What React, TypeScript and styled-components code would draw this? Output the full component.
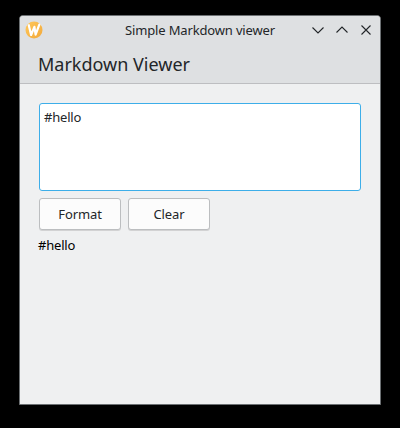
import React, { useState } from "react";
import styled, { createGlobalStyle } from "styled-components";

const GlobalStyle = createGlobalStyle`
  *, *::before, *::after { box-sizing: border-box; }
  html, body { margin: 0; height: 100%; background: #000; overflow: hidden; }
  body { font-family: "Noto Sans", sans-serif; font-size: 13px; color: #232629; }
`;

const Desktop = styled.div`
  width: 400px;
  height: 428px;
  padding: 15px 19px 23px;
  background: #000;
`;

const Window = styled.main`
  display: flex;
  flex-direction: column;
  width: 362px;
  height: 390px;
  border: 1px solid #6c7073;
  border-radius: 4px 4px 0 0;
  background: #eff0f1;
  overflow: hidden;
`;

const TitleBar = styled.header`
  display: grid;
  grid-template-columns: 70px 1fr 70px;
  align-items: center;
  height: 28px;
  flex: none;
  background: #dee0e2;
`;

const AppIcon = styled.svg`
  display: block;
  width: 18px;
  height: 18px;
  margin-left: 5px;
`;

const Title = styled.div`
  line-height: 18px;
  text-align: center;
  white-space: nowrap;
  padding-bottom: 1px;
  letter-spacing: -0.16px;
`;

const Controls = styled.div`
  display: flex;
  justify-content: flex-end;
  gap: 6px;
  padding-right: 5px;
`;

const ControlButton = styled.button`
  display: block;
  width: 18px;
  height: 18px;
  padding: 0;
  border: 0;
  background: none;

  svg {
    display: block;
    fill: none;
    stroke: #232629;
    stroke-width: 1.1;
  }
`;

const PageHeader = styled.div`
  height: 40px;
  flex: none;
  padding: 8px 18px 0;
  border-bottom: 1px solid #bdbec1;
  background: #dee0e2;
`;

const Heading = styled.h1`
  margin: 0;
  font-size: 18px;
  font-weight: 400;
  line-height: 25px;
`;

const Content = styled.section`
  display: flex;
  flex-direction: column;
  padding: 19px 19px 0;
`;

const Editor = styled.textarea`
  display: block;
  height: 88px;
  width: 322px;
  padding: 4px;
  border: 1px solid #3daee9;
  border-radius: 3px;
  outline: none;
  resize: none;
  background: #fff;
  color: #232629;
  font: 13px/18px "Noto Sans", sans-serif;
  letter-spacing: -0.2px;
`;

const Actions = styled.div`
  display: flex;
  gap: 7px;
  margin-top: 7px;
`;

const ActionButton = styled.button`
  width: 82px;
  height: 32px;
  padding: 0;
  border: 1px solid #bcbec0;
  border-radius: 3px;
  background: #fcfcfc;
  box-shadow: 0 1px 0 rgba(0, 0, 0, 0.12);
  color: #232629;
  font: 13px/18px "Noto Sans", sans-serif;
  letter-spacing: -0.1px;
`;

const Output = styled.div`
  margin: 6px 0 0 -1px;
  line-height: 18px;
  letter-spacing: -0.2px;
  color: #000;
`;

const controls = [
  { label: "Minimize", d: "M3.5 6.5 9 12l5.5-5.5" },
  { label: "Maximize", d: "M3.5 11.5 9 6l5.5 5.5" },
  { label: "Close", d: "M4.5 4.5l9 9M13.5 4.5l-9 9" },
];

export default function App() {
  const [source, setSource] = useState("#hello");
  const [output, setOutput] = useState("#hello");

  return (
    <Desktop>
      <GlobalStyle />
      <Window>
        <TitleBar>
          <AppIcon viewBox="0 0 18 18" aria-hidden="true">
            <defs>
              <linearGradient id="badge" x1="0" y1="0" x2="1" y2="1">
                <stop offset="0" stopColor="#ffc85a" />
                <stop offset="1" stopColor="#f2a93b" />
              </linearGradient>
            </defs>
            <circle cx="9" cy="9" r="8.5" fill="url(#badge)" />
            <path
              d="M3.8 4.2 6.1 14 9.4 5.8 10.6 13.6 14.3 3.6"
              fill="none"
              stroke="#fff"
              strokeWidth="2.2"
              strokeLinejoin="round"
              strokeLinecap="round"
            />
          </AppIcon>
          <Title>Simple Markdown viewer</Title>
          <Controls>
            {controls.map(({ label, d }) => (
              <ControlButton key={label} aria-label={label}>
                <svg width="18" height="18" viewBox="0 0 18 18">
                  <path d={d} />
                </svg>
              </ControlButton>
            ))}
          </Controls>
        </TitleBar>
        <PageHeader>
          <Heading>Markdown Viewer</Heading>
        </PageHeader>
        <Content>
          <Editor
            value={source}
            spellCheck={false}
            onChange={(event) => setSource(event.target.value)}
          />
          <Actions>
            <ActionButton onClick={() => setOutput(source)}>Format</ActionButton>
            <ActionButton onClick={() => setSource("")}>Clear</ActionButton>
          </Actions>
          <Output>{output}</Output>
        </Content>
      </Window>
    </Desktop>
  );
}
